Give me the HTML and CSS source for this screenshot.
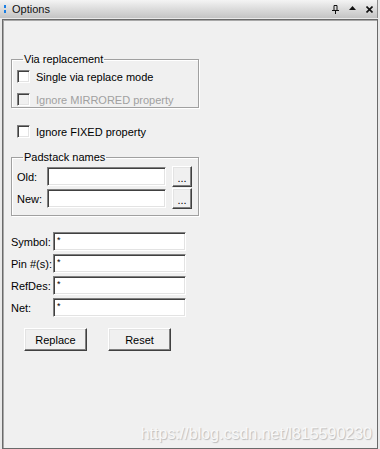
FILE: index.html
```html
<!DOCTYPE html>
<html lang="en">
<head>
    <meta charset="UTF-8">
    <title>Options</title>
    <link rel="stylesheet" href="styles.css">
</head>
<body>
    <div class="window">
        <div class="titlebar">
            <span class="grip"><i></i><i></i></span>
            <span class="title">Options</span>
            <span class="tools">
                <svg class="tool-pin" width="7" height="9" viewBox="0 0 7 9">
                    <path d="M2 0.5h3v5h-3z M0 5.5h7 M3.5 5.5v3.5" fill="none" stroke="#111" stroke-width="1"/>
                </svg>
                <svg class="tool-up" width="7" height="4" viewBox="0 0 7 4">
                    <path d="M0 4 L3.5 0 L7 4z" fill="#111"/>
                </svg>
                <svg class="tool-close" width="7" height="7" viewBox="0 0 7 7">
                    <path d="M0.5 0.5 L6.5 6.5 M6.5 0.5 L0.5 6.5" stroke="#111" stroke-width="1.6"/>
                </svg>
            </span>
        </div>

        <div class="panel">
            <fieldset class="group group-via">
                <legend>Via replacement</legend>
                <label class="check"><span class="box"></span>Single via replace mode</label>
                <label class="check disabled"><span class="box"></span>Ignore MIRRORED property</label>
            </fieldset>

            <label class="check check-fixed"><span class="box"></span>Ignore FIXED property</label>

            <fieldset class="group group-pad">
                <legend>Padstack names</legend>
                <div class="pad-row">
                    <span class="pad-label">Old:</span>
                    <span class="field pad-field"></span>
                    <span class="btn btn-dots">...</span>
                </div>
                <div class="pad-row">
                    <span class="pad-label">New:</span>
                    <span class="field pad-field"></span>
                    <span class="btn btn-dots">...</span>
                </div>
            </fieldset>

            <div class="filters">
                <div class="filter-row"><span class="filter-label">Symbol:</span><span class="field filter-field">*</span></div>
                <div class="filter-row"><span class="filter-label">Pin #(s):</span><span class="field filter-field">*</span></div>
                <div class="filter-row"><span class="filter-label">RefDes:</span><span class="field filter-field">*</span></div>
                <div class="filter-row"><span class="filter-label">Net:</span><span class="field filter-field">*</span></div>
            </div>

            <div class="actions">
                <span class="btn btn-action">Replace</span>
                <span class="btn btn-action">Reset</span>
            </div>

            <div class="watermark">https://blog.csdn.net/l815590230</div>
        </div>
    </div>
</body>
</html>
```

FILE: styles.css
```css
:root {
    --face: #f0f0f0;
    --text: #000;
    --muted: #a0a0a0;
    --shadow: #808080;
    --dark: #404040;
}

* {
    margin: 0;
    padding: 0;
    box-sizing: border-box;
}

body {
    font-family: "Liberation Sans", Arial, sans-serif;
    font-size: 11px;
    color: var(--text);
    background: var(--face);
}

.window {
    width: 380px;
    height: 449px;
    display: flex;
    flex-direction: column;
    padding-right: 2px;
    background: #e9e9e9;
}

/* Title bar */
.titlebar {
    height: 18px;
    display: flex;
    align-items: center;
    background: linear-gradient(#f4f4f4 0%, #dedede 45%, #c4c4c4 100%);
    border-right: 1px solid #8a8a8a;
}

.grip {
    display: flex;
    flex-direction: column;
    gap: 2px;
    margin: 0 6px 0 4px;
}

.grip i {
    display: block;
    width: 2px;
    height: 3px;
    background: #1c7fe3;
}

.title {
    font-size: 11px;
    color: #111;
}

.tools {
    margin-left: auto;
    display: flex;
    align-items: center;
    gap: 10px;
    margin-right: 4px;
}

.tool-up {
    margin-top: -2px;
}

/* Panel */
.panel {
    flex: 1;
    margin: 1px 0 0 2px;
    border: 1px solid #6a6a6a;
    box-shadow: inset 1px 1px #a8a8a8;
    background: var(--face);
    padding: 33px 0 0 8px;
    display: flex;
    flex-direction: column;
    align-items: flex-start;
}

/* Group boxes */
.group {
    width: 188px;
    border: 1px solid var(--muted);
    box-shadow: inset 1px 1px #fff, 1px 1px #fff;
    padding: 4px 5px 1px;
}

.group legend {
    margin-left: 6px;
    padding: 0 1px;
    line-height: 13px;
}

.group-pad {
    margin-top: 13px;
    padding: 2px 5px 6px;
}

/* Checkboxes */
.check {
    display: flex;
    align-items: center;
    height: 13px;
    gap: 6px;
}

.check + .check {
    margin-top: 10px;
}

.box {
    width: 13px;
    height: 13px;
    background: #fff;
    border: 1px solid;
    border-color: var(--shadow) #fff #fff var(--shadow);
    box-shadow: inset 1px 1px var(--dark), inset -1px -1px #e3e3e3;
}

.check.disabled {
    color: var(--muted);
}

.check.disabled .box {
    background: var(--face);
}

.check-fixed {
    margin: 17px 0 0 6px;
}

/* Inputs and buttons */
.field {
    display: block;
    height: 19px;
    background: #fff;
    border: 1px solid;
    border-color: var(--shadow) #fff #fff var(--shadow);
    box-shadow: inset 1px 1px var(--dark), inset -1px -1px #e3e3e3;
    padding: 2px 3px;
    font-size: 9px;
    line-height: 10px;
}

.btn {
    display: flex;
    align-items: center;
    justify-content: center;
    background: var(--face);
    border: 1px solid;
    border-color: #fff var(--dark) var(--dark) #fff;
    box-shadow: inset -1px -1px var(--shadow), inset 1px 1px #e3e3e3;
}

.pad-row {
    display: flex;
    align-items: center;
    height: 21px;
}

.pad-row + .pad-row {
    margin-top: 1px;
}

.pad-label {
    width: 30px;
}

.pad-field {
    width: 119px;
}

.btn-dots {
    width: 20px;
    height: 21px;
    margin-left: 6px;
    padding-top: 2px;
}

.filters {
    margin-top: 16px;
    display: flex;
    flex-direction: column;
    gap: 3px;
}

.filter-row {
    display: flex;
    align-items: center;
}

.filter-label {
    width: 42px;
}

.filter-field {
    width: 133px;
}

.actions {
    margin: 11px 0 0 13px;
    display: flex;
    gap: 21px;
}

.btn-action {
    width: 63px;
    height: 23px;
    font-size: 11px;
}

.watermark {
    margin: auto 5px 5px 0;
    align-self: flex-end;
    font-size: 16px;
    color: #f8f8f8;
    text-shadow: 1px 1px 1px rgba(0, 0, 0, 0.22);
}
```
